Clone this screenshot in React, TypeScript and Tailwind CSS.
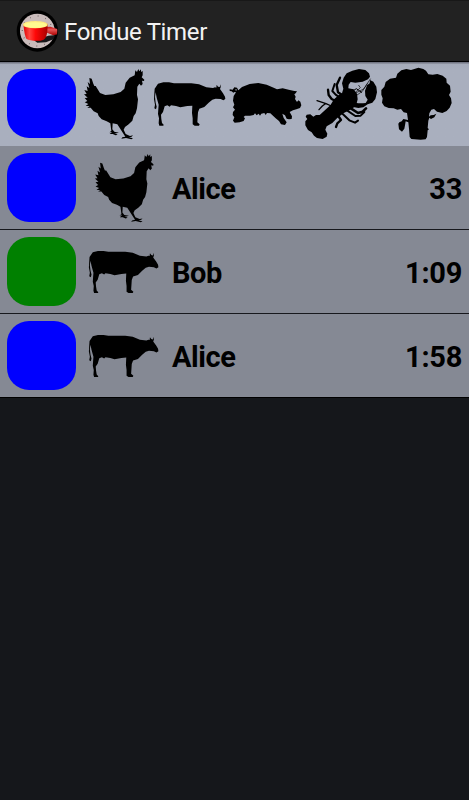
import React from "react";

type Shape = { className: string };

const Chicken = ({ className }: Shape) => (
  <svg viewBox="0 0 210 252" className={className} aria-hidden="true">
    <path d="M165 33L166 25L171 30L175 21L178 28L183 22L183 30L188 27L188 40L185 46L193 53L192 57L186 56L188 66L183 71L178 65L172 74L171 99L174 112L171 139L167 154L161 162L157 176L146 187L135 195L131 203L137 216L150 222L159 220L155 224L147 226L159 229L154 232L138 228L124 230L127 226L136 224L125 207L112 187L98 184L97 202L103 209L117 212L109 214L103 213L113 218L107 220L98 216L89 216L96 210L88 211L94 207L91 184L80 178L65 172L56 162L53 154L41 148L32 137L22 137L29 132L17 132L25 126L14 121L22 117L14 108L23 107L12 97L20 96L13 84L23 87L20 73L28 78L23 60L30 66L28 48L35 50L40 65L43 72L47 72L60 93L76 99L100 97L122 90L133 80L137 62L149 47L164 40Z" />
  </svg>
);

const Cow = ({ className }: Shape) => (
  <svg viewBox="0 0 234 252" className={className} aria-hidden="true">
    <path d="M24 65L40 61L57 61L72 64L124 64L147 67L169 76L189 78L195 76L199 77L200 68L204 74L209 75L212 67L212 76L210 81L219 94L225 104L226 111L220 115L212 111L197 110L187 113L176 122L163 135L148 140L144 151L143 166L142 181L149 187L147 191L134 191L128 187L128 169L126 153L127 131L112 132L91 136L78 132L63 130L59 134L52 130L44 133L39 150L33 158L34 171L36 183L41 188L40 191L28 191L26 184L27 169L24 156L25 141L26 128L20 107L17 91L15 105L17 122L20 134L18 142L13 139L15 128L12 112L13 94L14 80Z" />
  </svg>
);

const Pig = ({ className }: Shape) => (
  <svg viewBox="0 0 228 252" className={className} aria-hidden="true">
    <path d="M5 82L14 83L19 76L27 77L31 85L42 75L65 66L91 63L116 68L137 77L147 82L164 79L182 83L199 87L207 88L203 94L199 97L203 104L201 111L207 120L211 115L217 119L220 130L216 138L205 142L195 145L185 150L192 163L191 171L183 172L176 170L171 160L163 155L167 168L176 181L171 189L159 187L153 177L143 169L127 154L117 153L113 159L109 153L100 155L96 161L92 155L86 160L81 154L77 159L66 161L51 161L47 165L51 169L47 177L35 181L20 182L15 176L19 166L14 159L15 150L21 143L15 136L19 128L15 116L17 102L24 91L20 90L16 92L11 88L5 87ZM21 83L25 87L26 81Z" fillRule="evenodd" />
  </svg>
);

const Lobster = ({ className }: Shape) => (
  <svg viewBox="12 0 225 252" className={className} aria-hidden="true">
    <path d="M126 94L130 80L126 64L131 47L140 34L157 26L177 21L196 24L207 34L210 44L204 52L188 59L166 62L152 60L146 68L145 79L160 82L168 93L155 103L132 104Z" />
    <path d="M197 123L203 113L196 102L195 86L201 70L209 64L210 54L220 59L229 74L231 91L226 111L217 122L203 127L190 136L175 138L156 134L156 121L175 124L189 124Z" />
    <path d="M131 92L145 82L160 82L171 95L173 112L168 132L148 145L130 154L111 169L97 183L80 193L76 203L82 215L80 224L68 231L51 228L42 221L35 211L24 204L16 190L16 178L22 171L17 164L20 158L31 157L40 164L48 159L59 159L73 146L91 130L102 112L119 97Z" />
    <g fill="none" stroke="black" strokeLinecap="round" strokeLinejoin="round">
      <path d="M130 101L114 91L110 69L120 47" strokeWidth="7" />
      <path d="M123 109L107 98L97 87L104 66" strokeWidth="6" />
      <path d="M112 120L95 111L86 99L84 83" strokeWidth="7" />
      <path d="M94 132L78 125L51 116M76 125L67 132L57 143" strokeWidth="4" />
      <path d="M149 137L174 153L188 149L198 139" strokeWidth="8" />
      <path d="M141 145L166 162L182 161L193 150" strokeWidth="6" />
      <path d="M125 153L148 175L165 182L174 176" strokeWidth="6" />
      <path d="M115 162L123 174L112 184L108 195" strokeWidth="7" />
      <path d="M157 98L177 88L191 81L211 51M164 104L187 88L202 65M163 94L181 77L176 70" strokeWidth="2" />
      <path d="M157 88L169 80L185 91" strokeWidth="3" />
    </g>
  </svg>
);

const Broccoli = ({ className }: Shape) => (
  <svg viewBox="9 0 270 252" className={className} aria-hidden="true">
    <path d="M60 47L64 35L76 25L91 21L105 24L115 21L127 17L142 21L150 26L157 37L170 38L184 36L200 41L211 50L212 62L222 71L224 89L219 99L225 109L227 123L221 137L212 147L199 153L183 149L174 141L166 143L160 154L159 164L164 160L173 159L181 155L175 166L165 171L160 167L157 176L155 198L159 202L155 205L153 225L149 232L134 233L106 231L101 225L99 200L97 181L89 178L87 190L85 200L78 209L69 202L67 185L70 181L77 178L82 171L96 174L93 153L83 151L75 141L64 143L53 139L38 138L25 133L18 122L20 109L16 98L16 84L25 74L29 60L42 50Z" />
  </svg>
);

const AppLogo = () => (
  <svg viewBox="0 0 162 162" className="mt-0.5 h-[54px] w-[54px] shrink-0" aria-hidden="true">
    <defs>
      <linearGradient id="pot" x1="0" x2="1">
        <stop offset="0" stopColor="#e00000" />
        <stop offset=".25" stopColor="#ff4540" />
        <stop offset=".5" stopColor="#ff0808" />
        <stop offset="1" stopColor="#a80000" />
      </linearGradient>
      <linearGradient id="handle" x1="0" x2="0" y1="0" y2="1">
        <stop offset="0" stopColor="#c50d0d" />
        <stop offset=".35" stopColor="#e75555" />
        <stop offset="1" stopColor="#a00" />
      </linearGradient>
      <clipPath id="dial"><circle cx="82" cy="78" r="60" /></clipPath>
    </defs>
    <circle cx="82" cy="78" r="62" fill="#000" />
    <circle cx="82" cy="78" r="52" fill="#c9bbbb" />
    <circle cx="82" cy="78" r="45" fill="none" stroke="#655b5b" strokeWidth="4" strokeDasharray="2 21.56" />
    <g clipPath="url(#dial)">
      <path d="M72 106L115 92L136 90L130 103L108 112L82 113Z" fill="#171719" />
      <path d="M107 66L121 65L144 73L143 88L130 91L107 82Z" fill="url(#handle)" />
    </g>
    <path d="M40 58C44 48 108 48 113 58L112 78Q110 99 101 104C87 110 59 108 49 101Q44 94 40 58Z" fill="url(#pot)" />
    <ellipse cx="76" cy="59" rx="37" ry="11" fill="#ffed80" />
    <ellipse cx="76" cy="60" rx="33" ry="8" fill="#fffa91" />
  </svg>
);

const rows = [
  { name: "Alice", time: "33", color: "bg-[#0000ff]", food: "chicken" },
  { name: "Bob", time: "1:09", color: "bg-[#008000]", food: "cow" },
  { name: "Alice", time: "1:58", color: "bg-[#0000ff]", food: "cow" },
];

export default function App() {
  return (
    <main className="flex h-[800px] w-[469px] flex-col overflow-hidden bg-[#15171b] font-[Roboto,sans-serif]">
      <header className="flex h-[62px] shrink-0 items-center border-y border-t-[#181818] border-b-black bg-[#222222] pl-[10px]">
        <AppLogo />
        <h1 className="pt-0.5 text-[24px] leading-8 tracking-[-0.33px] text-[#f3f3f3]">Fondue Timer</h1>
      </header>
      <section className="flex h-[84px] shrink-0 items-center bg-[#a9afbe] bg-linear-to-b from-[#666975] from-0% via-[#a6acba] via-3% to-[#a9afbe] to-10% pl-[7px]">
        <div className="mr-1 mb-px h-[69px] w-[69px] shrink-0 rounded-[22px] bg-[#0000ff]" />
        <Chicken className="h-[84px] w-[70px] shrink-0" />
        <Cow className="h-[84px] w-[78px] shrink-0" />
        <Pig className="h-[84px] w-[76px] shrink-0" />
        <Lobster className="h-[84px] w-[75px] shrink-0" />
        <Broccoli className="h-[84px] w-[90px] shrink-0" />
      </section>
      {rows.map((row, i) => (
        <section key={i} className="flex h-[84px] shrink-0 items-center border-b border-[#17181d] bg-[#858994] pr-[7px] pl-[7px] last:border-black">
          <div className={`h-[69px] w-[69px] shrink-0 rounded-[22px] ${row.color}`} />
          <div className="flex w-24 shrink-0">
            {row.food === "chicken" ? (
              <Chicken className="ml-[15px] h-[82px] w-[68px] shrink-0" />
            ) : (
              <Cow className="ml-[9px] h-[82px] w-[76px] shrink-0" />
            )}
          </div>
          <span className="pt-0.5 text-[29px] leading-9 font-bold tracking-[-0.45px] text-black">{row.name}</span>
          <span className="ml-auto pt-0.5 text-[29px] leading-9 font-bold tracking-[-0.3px] text-black">{row.time}</span>
        </section>
      ))}
    </main>
  );
}
